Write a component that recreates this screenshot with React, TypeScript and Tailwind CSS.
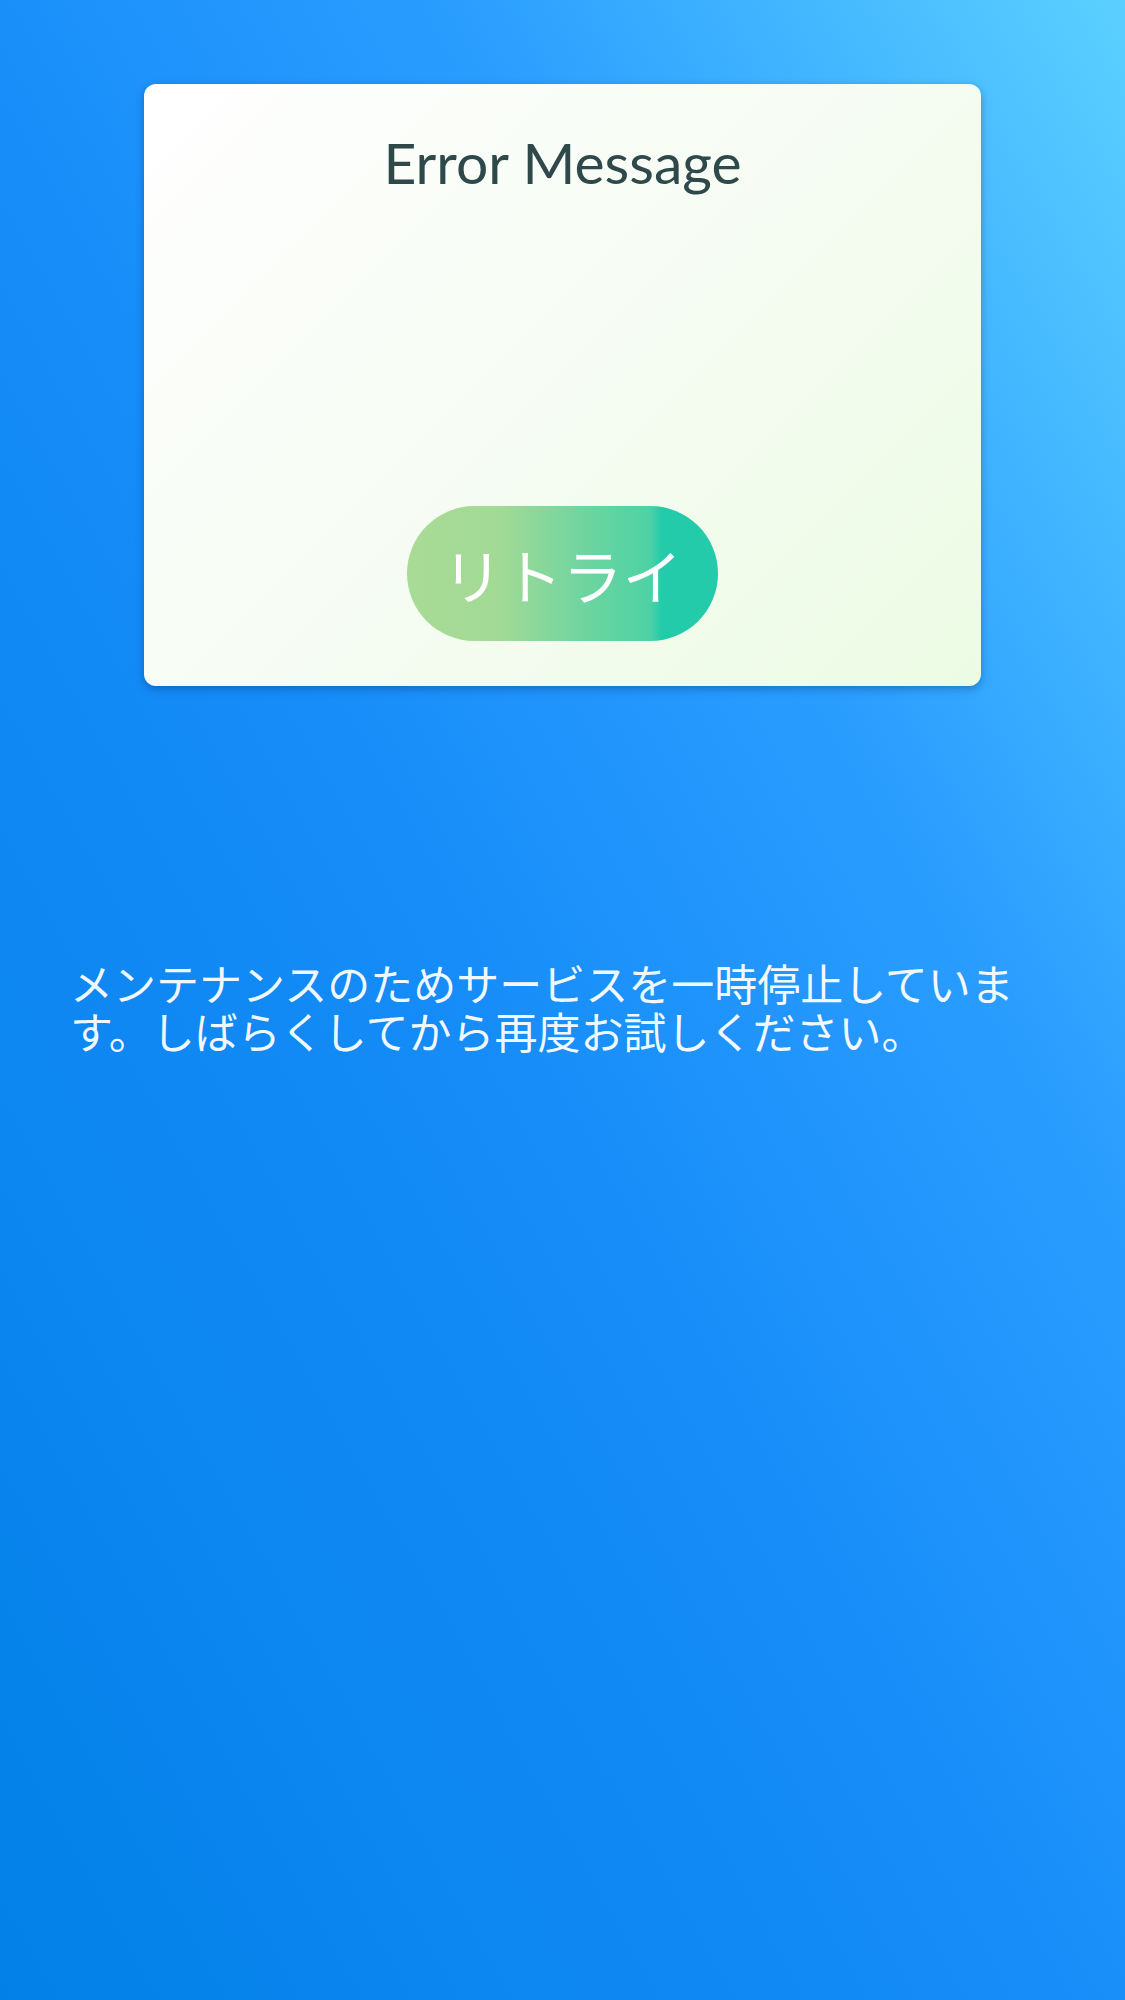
export default function App() {
  return (
    <div className="min-h-[2000px] w-full bg-[linear-gradient(to_top_right,#0380e8_0%,#158cf8_45%,#2a9dff_70%,#5bd0ff_100%)] pt-[84px] font-['Noto_Sans_CJK_JP',sans-serif]">
      <div className="mx-auto flex h-[602px] w-[837px] flex-col items-center justify-between rounded-[12px] bg-[linear-gradient(135deg,#ffffff_0%,#f6fcf3_50%,#ecfce4_100%)] pb-[45px] pt-[44px] shadow-[0_3px_8px_rgba(0,40,90,0.35)]">
        <h1 className="font-['Lato',sans-serif] text-[57px] leading-[68px] text-[#2f494b]">
          Error Message
        </h1>
        <button className="flex h-[135px] w-[311px] items-center justify-center rounded-full bg-[linear-gradient(to_right,#a8db96_0%,#a2da95_30%,#72d59f_55%,#4dd2a5_78%,#22cbaa_82%,#24cbab_100%)] text-[60px] font-normal text-white">
          リトライ
        </button>
      </div>
      <p className="mt-[272px] px-[70px] text-[43px] leading-[48px] text-white/95">
        メンテナンスのためサービスを一時停止しています。しばらくしてから再度お試しください。
      </p>
    </div>
  );
}
